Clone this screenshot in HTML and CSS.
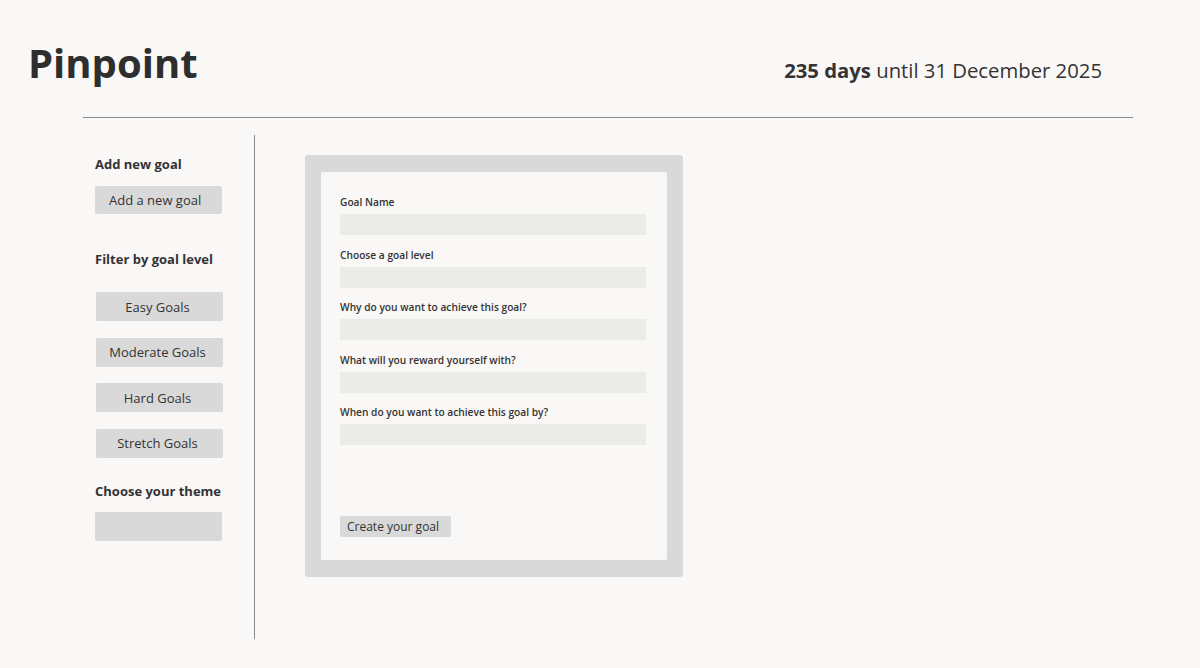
FILE: index.html
```html
<!DOCTYPE html>
<html lang="en">
<head>
<meta charset="utf-8">
<title>Pinpoint</title>
<link rel="stylesheet" href="styles.css">
</head>
<body>
<header class="header">
  <h1 class="logo">Pinpoint</h1>
  <p class="countdown"><strong>235 days</strong> until 31 December 2025</p>
</header>
<hr class="rule">
<main class="main">
  <aside class="sidebar">
    <h2 class="side-heading">Add new goal</h2>
    <button class="side-btn">Add a new goal</button>
    <h2 class="side-heading side-heading--filter">Filter by goal level</h2>
    <div class="filter-list">
      <button class="side-btn side-btn--center">Easy Goals</button>
      <button class="side-btn side-btn--center">Moderate Goals</button>
      <button class="side-btn side-btn--center">Hard Goals</button>
      <button class="side-btn side-btn--center">Stretch Goals</button>
    </div>
    <h2 class="side-heading side-heading--theme">Choose your theme</h2>
    <div class="theme-box"></div>
  </aside>
  <section class="content">
    <div class="card">
      <form class="form">
        <label class="field-label">Goal Name</label>
        <div class="field"></div>
        <label class="field-label">Choose a goal level</label>
        <div class="field"></div>
        <label class="field-label">Why do you want to achieve this goal?</label>
        <div class="field"></div>
        <label class="field-label">What will you reward yourself with?</label>
        <div class="field"></div>
        <label class="field-label">When do you want to achieve this goal by?</label>
        <div class="field"></div>
        <button type="button" class="create-btn">Create your goal</button>
      </form>
    </div>
  </section>
</main>
</body>
</html>
```
FILE: styles.css
```css
* { box-sizing: border-box; }
html, body { margin: 0; padding: 0; }
body {
  background: #f9f8f7;
  color: #333333;
  font-family: "Open Sans", "Noto Sans", sans-serif;
  width: 1200px;
  height: 668px;
  overflow: hidden;
}
.header {
  display: flex;
  justify-content: space-between;
  align-items: baseline;
  padding: 36px 98px 0 28px;
  height: 117px;
}
.logo {
  margin: 0;
  font-size: 40px;
  line-height: 54px;
  font-weight: 700;
  color: #2e2e2e;
}
.countdown {
  margin: 0;
  font-size: 20.3px;
  font-weight: 400;
  color: #333;
}
.countdown strong { font-weight: 700; }
.rule {
  margin: 0 67px 0 83px;
  border: 0;
  border-top: 1px solid #8a8a8a;
  height: 0;
}
.main {
  display: flex;
  margin-left: 95px;
  margin-top: 17px;
}
.sidebar {
  width: 160px;
  height: 504px;
  border-right: 1px solid #8a8a8a;
  padding-top: 20px;
  display: flex;
  flex-direction: column;
  align-items: flex-start;
}
.side-heading {
  margin: 0;
  font-size: 13px;
  line-height: 18px;
  font-weight: 700;
  color: #333;
}
.side-heading--filter { margin-top: 36px; }
.side-heading--theme { margin-top: 24px; }
.side-btn {
  margin-top: 13px;
  width: 127px;
  height: 28px;
  border: 0;
  border-radius: 2px;
  background: #d9d9d9;
  font-family: inherit;
  font-size: 13px;
  color: #333;
  text-align: left;
  padding: 0 0 0 14px;
}
.filter-list {
  margin-top: 24px;
  margin-left: 1px;
  display: flex;
  flex-direction: column;
  gap: 16.5px;
}
.filter-list .side-btn { margin-top: 0; height: 29px; }
.side-btn--center { text-align: center; padding: 0 4px 0 0; }
.theme-box {
  margin-top: 12px;
  width: 127px;
  height: 29px;
  border-radius: 2px;
  background: #d9d9d9;
}
.content {
  padding: 20px 0 0 50px;
}
.card {
  width: 378px;
  height: 422px;
  background: #d9d9d9;
  border-radius: 3px;
  padding: 17px 16px 17px 16px;
}
.form {
  background: #f9f8f7;
  border-radius: 2px;
  height: 388px;
  padding: 23px 21px 0 19px;
  display: flex;
  flex-direction: column;
  align-items: flex-start;
}
.field-label {
  font-size: 10.2px;
  line-height: 14px;
  font-weight: 600;
  color: #333;
}
.field {
  margin-top: 5px;
  margin-bottom: 12.5px;
  width: 100%;
  height: 21px;
  background: #ebebea;
}
.field:last-of-type { margin-bottom: 0; }
.create-btn {
  margin-top: 71px;
  width: 111px;
  height: 21px;
  border: 0;
  border-radius: 2px;
  background: #d9d9d9;
  font-family: inherit;
  font-size: 12px;
  color: #333;
  text-align: left;
  padding: 0 0 0 7px;
}
```
